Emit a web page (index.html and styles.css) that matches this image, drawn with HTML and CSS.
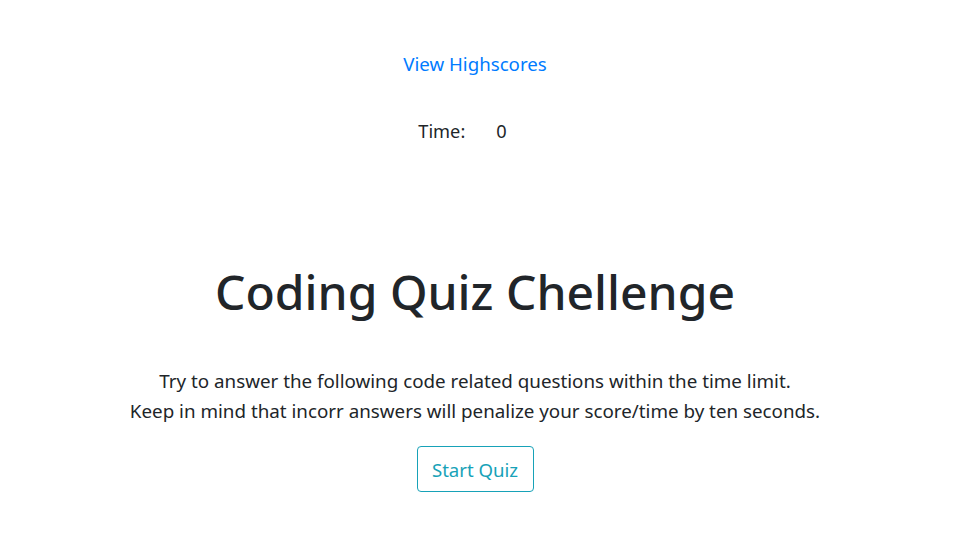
FILE: index.html
```html
<!DOCTYPE html>
<html lang="en">
<head>
<meta charset="utf-8">
<title>Coding Quiz</title>
<link rel="stylesheet" href="styles.css">
</head>
<body>
<header class="top">
  <a class="scores-link" href="#">View Highscores</a>
  <div class="timer"><span class="timer-label">Time:</span><span class="timer-value">0</span></div>
</header>
<main class="intro">
  <h1 class="title">Coding Quiz Chellenge</h1>
  <p class="lead">Try to answer the following code related questions within the time limit.<br>Keep in mind that incorr answers will penalize your score/time by ten seconds.</p>
  <button class="btn-start" type="button">Start Quiz</button>
</main>
</body>
</html>
```

FILE: styles.css
```css
* { box-sizing: border-box; }
html, body { margin: 0; padding: 0; background: #fff; }
body {
  font-family: "Noto Sans", "Open Sans", sans-serif;
  color: #212529;
  width: 950px;
  height: 541px;
  overflow: hidden;
}
.top {
  display: flex;
  flex-direction: column;
  align-items: center;
  padding-top: 49px;
}
.scores-link {
  font-size: 18.7px;
  line-height: 30px;
  color: #007bff;
  text-decoration: none;
}
.timer {
  margin-top: 37px;
  display: flex;
  gap: 31px;
  font-size: 18.2px;
  line-height: 30px;
  padding-right: 25px;
}
.intro {
  display: flex;
  flex-direction: column;
  align-items: center;
  text-align: center;
}
.title {
  margin: 112px 0 0;
  font-size: 48px;
  font-weight: 500;
  line-height: 67px;
}
.lead {
  margin: 41px 0 0;
  font-size: 18.8px;
  font-weight: 400;
  line-height: 30px;
}
.btn-start {
  margin-top: 20px;
  width: 117px;
  height: 46px;
  font-family: inherit;
  font-size: 18.6px;
  color: #17a2b8;
  background: transparent;
  border: 1px solid #17a2b8;
  border-radius: 4px;
  padding: 0;
  cursor: pointer;
}
```
